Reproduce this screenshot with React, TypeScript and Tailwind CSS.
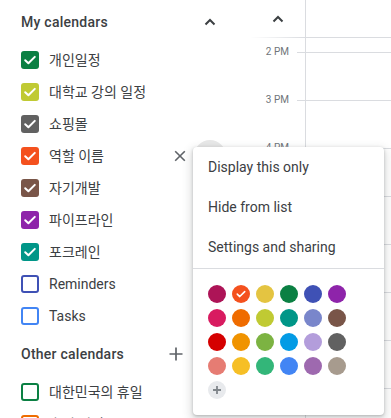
import React from "react";

const font = { fontFamily: 'Roboto, "Noto Sans CJK KR", Arial, sans-serif' };

type Cal = { name: string; color: string; checked: boolean };

const myCals: Cal[] = [
  { name: "개인일정", color: "#0b8043", checked: true },
  { name: "대학교 강의 일정", color: "#c0ca33", checked: true },
  { name: "쇼핑몰", color: "#616161", checked: true },
  { name: "역할 이름", color: "#f4511e", checked: true },
  { name: "자기개발", color: "#795548", checked: true },
  { name: "파이프라인", color: "#8e24aa", checked: true },
  { name: "포크레인", color: "#009688", checked: true },
  { name: "Reminders", color: "#3f51b5", checked: false },
  { name: "Tasks", color: "#4285f4", checked: false },
];

const otherCals: Cal[] = [
  { name: "대한민국의 휴일", color: "#0b8043", checked: false },
  { name: "휴일 일정 목록", color: "#ef6c00", checked: false },
];

const palette = [
  ["#ad1457", "#f4511e", "#e4c441", "#0b8043", "#3f51b5", "#8e24aa"],
  ["#d81b60", "#ef6c00", "#c0ca33", "#009688", "#7986cb", "#795548"],
  ["#d50000", "#f09300", "#7cb342", "#039be5", "#b39ddb", "#616161"],
  ["#e67c73", "#f6bf26", "#33b679", "#4285f4", "#9e69af", "#a79b8e"],
];

function Check({ size = 18 }: { size?: number }) {
  return (
    <svg width={size} height={size} viewBox="0 0 18 18">
      <path d="M4.2 9.2 L7.4 12.3 L13.8 5.9" fill="none" stroke="#fff" strokeWidth="2" strokeLinecap="round" strokeLinejoin="round" />
    </svg>
  );
}

function Chevron() {
  return (
    <svg width="12" height="8" viewBox="0 0 12 8">
      <path d="M1.5 6.5 L6 2 L10.5 6.5" fill="none" stroke="#3c4043" strokeWidth="2" />
    </svg>
  );
}

function Row({ cal, hover }: { cal: Cal; hover?: boolean }) {
  return (
    <div className="relative flex h-8 items-center pl-[21px]">
      {cal.checked ? (
        <div className="flex h-[18px] w-[18px] items-center justify-center rounded-[3px]" style={{ backgroundColor: cal.color }}>
          <Check />
        </div>
      ) : (
        <div className="h-[18px] w-[18px] rounded-[3px] border-2" style={{ borderColor: cal.color }} />
      )}
      <span className="ml-[10px] text-[14px] text-[#3c4043]">{cal.name}</span>
      {hover && (
        <>
          <div className="ml-auto mr-[2px] flex h-6 w-6 items-center justify-center">
            <svg width="12" height="12" viewBox="0 0 12 12">
              <path d="M1.2 1.2 L10.8 10.8 M10.8 1.2 L1.2 10.8" stroke="#5f6368" strokeWidth="1.6" />
            </svg>
          </div>
          <div className="mr-[24px] h-8 w-8 rounded-full bg-[#e8e8e8]" />
        </>
      )}
    </div>
  );
}

export default function App() {
  const times = ["2 PM", "3 PM", "4 PM", "", "", "", "", ""];
  return (
    <div className="relative flex h-[418px] w-[391px] overflow-hidden bg-white" style={font}>
      {/* Sidebar */}
      <div className="w-[250px] shrink-0">
        <div className="flex h-[44px] items-center pl-[21px] pr-[20px]">
          <span className="text-[14px] font-medium tracking-[0.25px] text-[#3c4043]">My calendars</span>
          <div className="ml-auto flex h-10 w-10 items-center justify-center">
            <Chevron />
          </div>
        </div>
        {myCals.map((c) => (
          <Row key={c.name} cal={c} hover={c.name === "역할 이름"} />
        ))}
        <div className="flex h-[44px] items-center pl-[21px]">
          <span className="text-[14px] font-medium tracking-[0.25px] text-[#3c4043]">Other calendars</span>
          <div className="ml-auto mr-[62px] flex h-6 w-6 items-center justify-center">
            <svg width="16" height="16" viewBox="0 0 16 16">
              <path d="M8 1.5 V14.5 M1.5 8 H14.5" stroke="#5f6368" strokeWidth="1.7" />
            </svg>
          </div>
        </div>
        {otherCals.map((c) => (
          <Row key={c.name} cal={c} />
        ))}
      </div>

      {/* Main grid */}
      <div className="flex flex-1">
        <div className="w-[55px] shrink-0">
          <div className="flex h-[37px] items-center justify-center pt-[1px]">
            <Chevron />
          </div>
          <div className="h-px bg-gradient-to-r from-transparent to-[#dadce0]" />
          <div className="h-[14px]" />
          {times.map((t, i) => (
            <div key={i} className="flex h-12 items-start justify-end">
              <span className="-mt-[6px] text-[10px] leading-[12px] text-[#70757a]">{t}</span>
              <div className="w-2" />
              <div className="h-px w-2 bg-[#dadce0]" />
            </div>
          ))}
        </div>
        <div className="flex-1 border-l border-[#dadce0]">
          <div className="h-[37px]" />
          <div className="h-px bg-[#dadce0]" />
          <div className="h-[14px]" />
          {times.map((_, i) => (
            <div key={i} className="h-12 border-t border-[#dadce0]" />
          ))}
        </div>
      </div>

      {/* Context menu */}
      <div className="absolute left-[193px] top-[147px] flex h-[268px] w-[191px] flex-col rounded-[4px] bg-white shadow-[0_1px_3px_0_rgba(60,64,67,0.3),0_4px_8px_3px_rgba(60,64,67,0.15)]">
        {["Display this only", "Hide from list", "Settings and sharing"].map((m) => (
          <div key={m} className="flex h-10 items-center pl-[15px] text-[14px] text-[#3c4043]">
            {m}
          </div>
        ))}
        <div className="mt-px h-px bg-[#dadce0]" />
        <div className="flex flex-col gap-[6px] pl-[15px] pt-[16px]">
          {palette.map((row, i) => (
            <div key={i} className="flex gap-[6px]">
              {row.map((c, j) => (
                <div key={j} className="flex h-[18px] w-[18px] items-center justify-center rounded-full" style={{ backgroundColor: c }}>
                  {i === 0 && j === 1 && <Check size={14} />}
                </div>
              ))}
            </div>
          ))}
          <div className="flex h-[18px] w-[18px] items-center justify-center rounded-full bg-[#e8eaed]">
            <svg width="10" height="10" viewBox="0 0 10 10">
              <path d="M5 1 V9 M1 5 H9" stroke="#80868b" strokeWidth="1.8" />
            </svg>
          </div>
        </div>
      </div>
    </div>
  );
}
